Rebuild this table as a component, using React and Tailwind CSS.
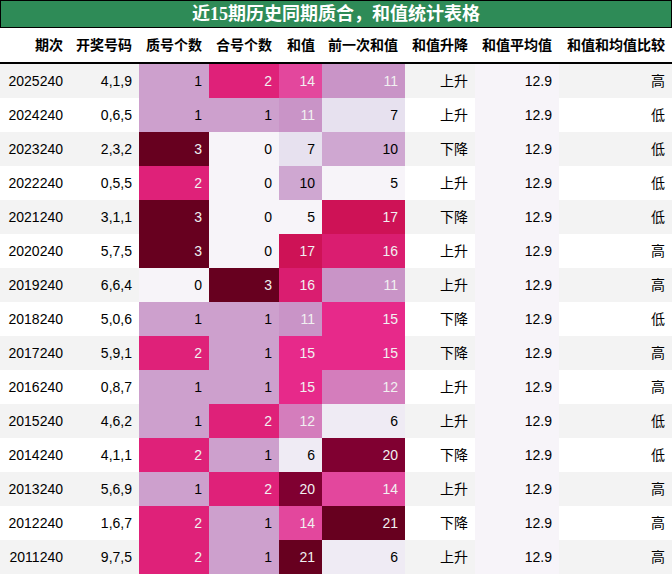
import React from "react";

const rows = [
  ["2025240", "4,1,9", 1, 2, 14, 11, "上升", "高"],
  ["2024240", "0,6,5", 1, 1, 11, 7, "上升", "低"],
  ["2023240", "2,3,2", 3, 0, 7, 10, "下降", "低"],
  ["2022240", "0,5,5", 2, 0, 10, 5, "上升", "低"],
  ["2021240", "3,1,1", 3, 0, 5, 17, "下降", "低"],
  ["2020240", "5,7,5", 3, 0, 17, 16, "上升", "高"],
  ["2019240", "6,6,4", 0, 3, 16, 11, "上升", "高"],
  ["2018240", "5,0,6", 1, 1, 11, 15, "下降", "低"],
  ["2017240", "5,9,1", 2, 1, 15, 15, "下降", "高"],
  ["2016240", "0,8,7", 1, 1, 15, 12, "上升", "高"],
  ["2015240", "4,6,2", 1, 2, 12, 6, "上升", "低"],
  ["2014240", "4,1,1", 2, 1, 6, 20, "下降", "低"],
  ["2013240", "5,6,9", 1, 2, 20, 14, "上升", "高"],
  ["2012240", "1,6,7", 2, 1, 14, 21, "下降", "高"],
  ["2011240", "9,7,5", 2, 1, 21, 6, "上升", "高"],
];

const countScale = {
  0: "bg-[#f7f4f9] text-black",
  1: "bg-[#cda0cd] text-black",
  2: "bg-[#df2179] text-[#f1f1f1]",
  3: "bg-[#67001f] text-[#f1f1f1]",
};

const sumScale = {
  5: "bg-[#f7f4f9] text-black",
  6: "bg-[#efebf4] text-black",
  7: "bg-[#e7e1ef] text-black",
  10: "bg-[#cfa7d1] text-black",
  11: "bg-[#c994c7] text-[#f1f1f1]",
  12: "bg-[#d47dbc] text-[#f1f1f1]",
  14: "bg-[#e3479d] text-[#f1f1f1]",
  15: "bg-[#e7298a] text-[#f1f1f1]",
  16: "bg-[#da1d70] text-[#f1f1f1]",
  17: "bg-[#ce1256] text-[#f1f1f1]",
  20: "bg-[#800031] text-[#f1f1f1]",
  21: "bg-[#67001f] text-[#f1f1f1]",
};

const headers = ["期次", "开奖号码", "质号个数", "合号个数", "和值", "前一次和值", "和值升降", "和值平均值", "和值和均值比较"];

const cell = "flex items-center justify-end pr-[7px] whitespace-nowrap";
const grid = "grid grid-cols-[70px_69px_70px_70px_43px_83px_70px_84px_113px]";

export default function App() {
  return (
    <div className="w-[672px] h-[575px] bg-white" style={{ fontFamily: '"Liberation Sans", "Noto Sans CJK SC", sans-serif' }}>
      <div
        className="h-[28px] border border-black bg-[#2e8b57] text-white text-[18px] font-bold flex items-center justify-center leading-none"
        style={{ fontFamily: '"Liberation Serif", "Noto Sans CJK SC", serif' }}
      >
        近15期历史同期质合，和值统计表格
      </div>
      <div className={`${grid} h-[36px] border-b-2 border-black text-[14px] font-bold text-black`}>
        {headers.map((h) => (
          <div key={h} className={cell}>{h}</div>
        ))}
      </div>
      {rows.map((r, i) => {
        const stripe = i % 2 === 0 ? "bg-[#f3f3f3]" : "bg-white";
        return (
          <div key={r[0]} className={`${grid} h-[34px] text-[14px] text-black`}>
            <div className={`${cell} ${stripe}`}>{r[0]}</div>
            <div className={`${cell} ${stripe}`}>{r[1]}</div>
            <div className={`${cell} ${countScale[r[2]]}`}>{r[2]}</div>
            <div className={`${cell} ${countScale[r[3]]}`}>{r[3]}</div>
            <div className={`${cell} ${sumScale[r[4]]}`}>{r[4]}</div>
            <div className={`${cell} ${sumScale[r[5]]}`}>{r[5]}</div>
            <div className={`${cell} ${stripe}`}>{r[6]}</div>
            <div className={`${cell} bg-[#f7f4f9]`}>12.9</div>
            <div className={`${cell} ${stripe}`}>{r[7]}</div>
          </div>
        );
      })}
    </div>
  );
}
